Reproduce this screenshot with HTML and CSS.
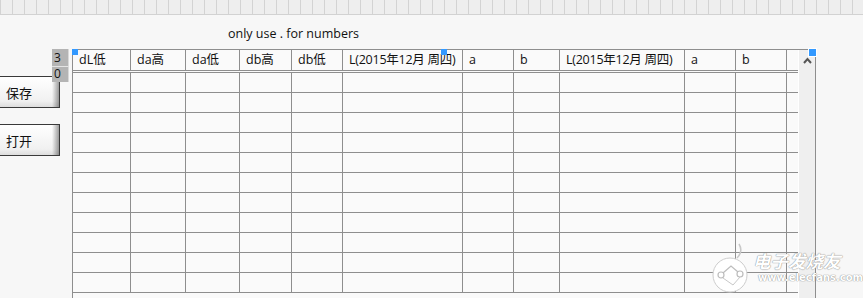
FILE: index.html
```html
<!DOCTYPE html>
<html lang="zh">
<head>
<meta charset="utf-8">
<title>Table</title>
<link rel="stylesheet" href="styles.css">
</head>
<body>
<div class="ruler"></div>
<div class="caption">only use . for numbers</div>
<div class="workspace">
  <div class="side">
    <button class="btn">保存</button>
    <button class="btn">打开</button>
  </div>
  <div class="table-wrap">
    <div class="index"><span class="index-cell">3</span><span class="index-cell index-cell-low">0</span></div>
    <span class="handle handle-tl"></span>
    <span class="handle handle-mid"></span>
    <span class="handle handle-tr"></span>
    <div class="grid">
      <div class="row head">
        <div class="cell">dL低</div><div class="cell">da高</div><div class="cell">da低</div><div class="cell">db高</div><div class="cell">db低</div><div class="cell cell-tight">L(2015年12月 周四)</div><div class="cell">a</div><div class="cell">b</div><div class="cell cell-tight">L(2015年12月 周四)</div><div class="cell">a</div><div class="cell">b</div><div class="cell"></div>
      </div>
      <div class="body">
        <div class="row"><div class="cell"></div><div class="cell"></div><div class="cell"></div><div class="cell"></div><div class="cell"></div><div class="cell"></div><div class="cell"></div><div class="cell"></div><div class="cell"></div><div class="cell"></div><div class="cell"></div><div class="cell"></div></div>
        <div class="row"><div class="cell"></div><div class="cell"></div><div class="cell"></div><div class="cell"></div><div class="cell"></div><div class="cell"></div><div class="cell"></div><div class="cell"></div><div class="cell"></div><div class="cell"></div><div class="cell"></div><div class="cell"></div></div>
        <div class="row"><div class="cell"></div><div class="cell"></div><div class="cell"></div><div class="cell"></div><div class="cell"></div><div class="cell"></div><div class="cell"></div><div class="cell"></div><div class="cell"></div><div class="cell"></div><div class="cell"></div><div class="cell"></div></div>
        <div class="row"><div class="cell"></div><div class="cell"></div><div class="cell"></div><div class="cell"></div><div class="cell"></div><div class="cell"></div><div class="cell"></div><div class="cell"></div><div class="cell"></div><div class="cell"></div><div class="cell"></div><div class="cell"></div></div>
        <div class="row"><div class="cell"></div><div class="cell"></div><div class="cell"></div><div class="cell"></div><div class="cell"></div><div class="cell"></div><div class="cell"></div><div class="cell"></div><div class="cell"></div><div class="cell"></div><div class="cell"></div><div class="cell"></div></div>
        <div class="row"><div class="cell"></div><div class="cell"></div><div class="cell"></div><div class="cell"></div><div class="cell"></div><div class="cell"></div><div class="cell"></div><div class="cell"></div><div class="cell"></div><div class="cell"></div><div class="cell"></div><div class="cell"></div></div>
        <div class="row"><div class="cell"></div><div class="cell"></div><div class="cell"></div><div class="cell"></div><div class="cell"></div><div class="cell"></div><div class="cell"></div><div class="cell"></div><div class="cell"></div><div class="cell"></div><div class="cell"></div><div class="cell"></div></div>
        <div class="row"><div class="cell"></div><div class="cell"></div><div class="cell"></div><div class="cell"></div><div class="cell"></div><div class="cell"></div><div class="cell"></div><div class="cell"></div><div class="cell"></div><div class="cell"></div><div class="cell"></div><div class="cell"></div></div>
        <div class="row"><div class="cell"></div><div class="cell"></div><div class="cell"></div><div class="cell"></div><div class="cell"></div><div class="cell"></div><div class="cell"></div><div class="cell"></div><div class="cell"></div><div class="cell"></div><div class="cell"></div><div class="cell"></div></div>
        <div class="row"><div class="cell"></div><div class="cell"></div><div class="cell"></div><div class="cell"></div><div class="cell"></div><div class="cell"></div><div class="cell"></div><div class="cell"></div><div class="cell"></div><div class="cell"></div><div class="cell"></div><div class="cell"></div></div>
        <div class="row"><div class="cell"></div><div class="cell"></div><div class="cell"></div><div class="cell"></div><div class="cell"></div><div class="cell"></div><div class="cell"></div><div class="cell"></div><div class="cell"></div><div class="cell"></div><div class="cell"></div><div class="cell"></div></div>
      </div>
    </div>
    <div class="scrollbar">
      <svg class="chev" width="9" height="7" viewBox="0 0 9 7"><path d="M1 6 L4.5 2 L8 6" fill="none" stroke="#555" stroke-width="2"/></svg>
    </div>
  </div>
</div>
<div class="watermark">
  <svg class="wm-logo" width="40" height="56" viewBox="0 0 40 56">
    <circle cx="19" cy="34" r="17" fill="#ffffff" stroke="#cdcdcd" stroke-width="1"/>
    <path d="M28 3 C31 8 31 12 26 17" fill="none" stroke="#c8c8c8" stroke-width="1.5"/>
    <circle cx="10" cy="34" r="3" fill="#fff" stroke="#bdbdbd" stroke-width="1.2"/>
    <circle cx="29" cy="33" r="3" fill="#fff" stroke="#bdbdbd" stroke-width="1.2"/>
    <path d="M12 32 L20 25 L27 31" fill="none" stroke="#bdbdbd" stroke-width="1.2"/>
    <path d="M12 37 L22 44 L29 36" fill="none" stroke="#c8c8c8" stroke-width="1"/>
  </svg>
  <div class="wm-text">
    <div class="wm-cn">电子发烧友</div>
    <div class="wm-url">www.elecfans.com</div>
  </div>
</div>
</body>
</html>
```

FILE: styles.css
```css
html, body {
  margin: 0;
  padding: 0;
}
body {
  width: 863px;
  height: 298px;
  overflow: hidden;
  background: #f7f7f7;
  font-family: "Open Sans", "Noto Sans CJK SC", sans-serif;
  font-size: 13px;
  color: #111;
  position: relative;
}
.ruler {
  height: 14px;
  border-bottom: 1px solid #d2d2d2;
  background-color: #eeeeee;
  background-image: linear-gradient(to right, #d3d3d3 1px, transparent 1px);
  background-size: 12px 100%;
}
.caption {
  box-sizing: border-box;
  height: 34px;
  padding: 9px 0 0 228px;
  line-height: 20px;
  font-size: 12.5px;
  color: #111;
}
.workspace {
  display: flex;
  align-items: flex-start;
}
.side {
  width: 72px;
  flex: none;
  display: flex;
  flex-direction: column;
  gap: 16px;
  padding-top: 27px;
}
.btn {
  box-sizing: border-box;
  width: 60px;
  height: 32px;
  margin: 0;
  padding: 0 0 0 6px;
  text-align: left;
  border: 0;
  border-top: 1px solid #3a3a3a;
  border-right: 1px solid #3a3a3a;
  border-bottom: 1px solid #3a3a3a;
  background:
    linear-gradient(to right, rgba(0,0,0,0) 52px, rgba(0,0,0,0.38) 59px),
    linear-gradient(to bottom, rgba(0,0,0,0) 24px, rgba(0,0,0,0.08) 31px),
    linear-gradient(#ffffff, #ededed);
  font-family: "Noto Sans CJK SC", sans-serif;
  font-size: 13px;
  color: #111;
}
.table-wrap {
  position: relative;
  display: flex;
  width: 744px;
  height: 260px;
  box-sizing: border-box;
  border-top: 1px solid #8e8e8e;
  border-left: 1px solid #8e8e8e;
  border-right: 1px solid #8e8e8e;
}
.grid {
  width: 725px;
  flex: none;
  background: #fafafa;
  overflow: hidden;
}
.row {
  display: grid;
  grid-template-columns: 58px 55px 54px 52px 51px 120px 51px 46px 125px 51px 51px 11px;
  box-sizing: border-box;
  height: 20px;
  border-bottom: 1px solid #8e8e8e;
}
.head {
  height: 21px;
  margin-bottom: 1px;
}
.body {
  border-top: 1px solid #8e8e8e;
}
.cell {
  border-right: 1px solid #8e8e8e;
  padding-left: 6px;
  line-height: 20px;
  white-space: nowrap;
  overflow: hidden;
  font-size: 12.5px;
}
.cell-tight {
  letter-spacing: -0.25px;
}
.cell:last-child {
  border-right: 0;
}
.scrollbar {
  flex: 1;
  background: #efefef;
  border-left: 1px solid #ffffff;
  display: flex;
  justify-content: center;
  padding-top: 7px;
  align-items: flex-start;
}
.index {
  position: absolute;
  left: -21px;
  top: -1px;
  width: 17px;
  display: flex;
  flex-direction: column;
}
.index-cell {
  display: block;
  box-sizing: border-box;
  height: 18px;
  background: #b4b4b4;
  border-right: 1px solid #d8d8d8;
  border-bottom: 1px solid #e4e4e4;
  padding-left: 2px;
  line-height: 17px;
  font-size: 12px;
  color: #111;
}
.index-cell-low {
  height: 15px;
  line-height: 13px;
  border-bottom: 0;
}
.handle {
  position: absolute;
  background: #3399ff;
}
.handle-tl {
  left: -1px;
  top: -1px;
  width: 6px;
  height: 6px;
}
.handle-mid {
  left: 368px;
  top: -1px;
  width: 6px;
  height: 6px;
}
.handle-tr {
  left: 736px;
  top: -1px;
  width: 7px;
  height: 7px;
  box-shadow: 0 0 0 1px #ffffff;
}
.watermark {
  position: absolute;
  left: 711px;
  top: 241px;
  display: flex;
  align-items: flex-start;
  gap: 2px;
}
.wm-text {
  padding-top: 10px;
}
.wm-cn {
  font-family: "Noto Sans CJK SC", sans-serif;
  font-size: 17.5px;
  font-weight: 700;
  font-style: italic;
  line-height: 20px;
  color: #ffffff;
  text-shadow: 0 0 1px #8e8e8e, 0 0 1px #8e8e8e;
}
.wm-url {
  font-family: "DejaVu Sans", sans-serif;
  font-size: 10px;
  font-weight: 700;
  line-height: 14px;
  padding-left: 5px;
  color: #ffffff;
  text-shadow: 0 0 1px #8e8e8e, 0 0 1px #8e8e8e;
}
```
